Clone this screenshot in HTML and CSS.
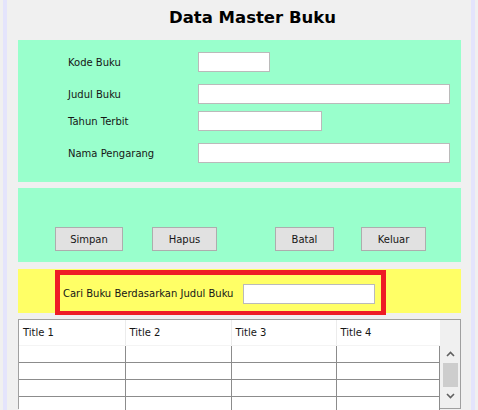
FILE: index.html
```html
<!DOCTYPE html>
<html>
  <head>
    <title>Data Master Buku</title>
    <link rel="stylesheet" href="styles.css">
  </head>
  <body>
    <div class="frame">
      <h1 class="title">Data Master Buku</h1>

      <div class="panel form-panel">
        <div class="row row-kode">
          <label>Kode Buku</label>
          <input type="text" class="in-kode">
        </div>
        <div class="row row-judul">
          <label>Judul Buku</label>
          <input type="text" class="in-judul">
        </div>
        <div class="row row-tahun">
          <label>Tahun Terbit</label>
          <input type="text" class="in-tahun">
        </div>
        <div class="row row-nama">
          <label>Nama Pengarang</label>
          <input type="text" class="in-nama">
        </div>
      </div>

      <div class="panel button-panel">
        <button class="btn btn-simpan">Simpan</button>
        <button class="btn btn-hapus">Hapus</button>
        <button class="btn btn-batal">Batal</button>
        <button class="btn btn-keluar">Keluar</button>
      </div>

      <div class="search-panel">
        <div class="search-box">
          <span>Cari Buku Berdasarkan Judul Buku</span>
          <input type="text" class="in-cari">
        </div>
      </div>

      <div class="table-box">
        <table class="grid">
          <thead>
            <tr><th>Title 1</th><th>Title 2</th><th>Title 3</th><th>Title 4</th></tr>
          </thead>
          <tbody>
            <tr><td></td><td></td><td></td><td></td></tr>
            <tr><td></td><td></td><td></td><td></td></tr>
            <tr><td></td><td></td><td></td><td></td></tr>
            <tr><td></td><td></td><td></td><td></td></tr>
          </tbody>
        </table>
        <div class="scrollbar">
          <div class="sb-arrow sb-up">
            <svg width="9" height="6" viewBox="0 0 9 6"><path d="M1 5 L4.5 1.5 L8 5" fill="none" stroke="#606060" stroke-width="1.6"/></svg>
          </div>
          <div class="sb-thumb"></div>
          <div class="sb-arrow sb-down">
            <svg width="9" height="6" viewBox="0 0 9 6"><path d="M1 1 L4.5 4.5 L8 1" fill="none" stroke="#606060" stroke-width="1.6"/></svg>
          </div>
        </div>
      </div>
    </div>
  </body>
</html>
```

FILE: styles.css
```css
*{
  box-sizing:border-box;
}
body{
  margin:0;
  background-color:#f0f0f0;
  font-family:"DejaVu Sans", sans-serif;
  font-size:10px;
  color:#161616;
  overflow:hidden;
}
.frame{
  width:472px;
  height:410px;
  margin-left:3px;
  border-left:4px solid #e4e4fc;
  border-right:4px solid #e4e4fc;
  padding:0 10px 0 11px;
  margin-right:3px;
}
.title{
  margin:0;
  height:40px;
  padding:8px 0 0 151px;
  font-size:16.5px;
  line-height:20px;
  font-weight:bold;
  color:#000;
  letter-spacing:0;
}
.panel{
  background-color:#99ffcc;
}
.form-panel{
  height:142px;
  padding-top:12px;
  padding-left:50px;
}
.row{
  display:flex;
  align-items:center;
  height:20px;
}
.row-judul,
.row-nama{
  margin-top:12px;
}
.row-tahun{
  margin-top:7px;
}
.row label{
  width:130px;
}
input{
  height:20px;
  border:1px solid #bababa;
  background:#fff;
  margin:0;
  padding:0 3px;
  font:inherit;
}
.in-kode{ width:72px; }
.in-judul{ width:252px; }
.in-tahun{ width:124px; }
.in-nama{ width:252px; }

.button-panel{
  margin-top:6px;
  height:74px;
  padding-top:39px;
  display:flex;
  align-items:flex-start;
}
.btn{
  height:24px;
  background:#e1e1e1;
  border:1px solid #adadad;
  font:inherit;
  color:#161616;
  padding:0;
}
.btn-simpan{ margin-left:37px; width:68px; }
.btn-hapus{ margin-left:29px; width:65px; }
.btn-batal{ margin-left:58px; width:59px; }
.btn-keluar{ margin-left:27px; width:65px; }

.search-panel{
  margin-top:7px;
  height:44px;
  padding-top:1px;
  background-color:#ffff66;
}
.search-box{
  margin-left:37px;
  width:331px;
  height:45px;
  border:5px solid #ee1c25;
  border-bottom-width:4px;
  display:flex;
  align-items:center;
  justify-content:space-between;
  padding:1px 6px 0 3px;
}
.in-cari{
  width:132px;
}

.table-box{
  margin-top:6px;
  width:443px;
  height:90px;
  border:1px solid #a0a0a0;
  display:flex;
  background:#f0f0f0;
}
.grid{
  width:422px;
  border-collapse:collapse;
  table-layout:fixed;
  background:#fff;
  align-self:flex-start;
}
.grid th{
  height:25px;
  text-align:left;
  font-weight:normal;
  padding:0 0 0 4px;
  border-right:1px solid #ececec;
  border-bottom:1px solid #f4f4f4;
}
.grid th:first-child,
.grid td:first-child{
  width:106px;
}
.grid th:nth-child(2),
.grid td:nth-child(2){
  width:106px;
}
.grid th:nth-child(3),
.grid td:nth-child(3){
  width:105px;
}
.grid td{
  height:17px;
  padding:0;
  border-right:1px solid #8c8c8c;
  border-bottom:1px solid #8c8c8c;
}
.grid th:last-child{
  border-right:none;
}
.scrollbar{
  width:20px;
  padding-top:25px;
  display:flex;
  flex-direction:column;
  align-items:center;
}
.sb-arrow{
  height:18px;
  width:17px;
  display:flex;
  align-items:center;
  justify-content:center;
}
.sb-thumb{
  width:15px;
  height:24px;
  background:#cdcdcd;
}
```
